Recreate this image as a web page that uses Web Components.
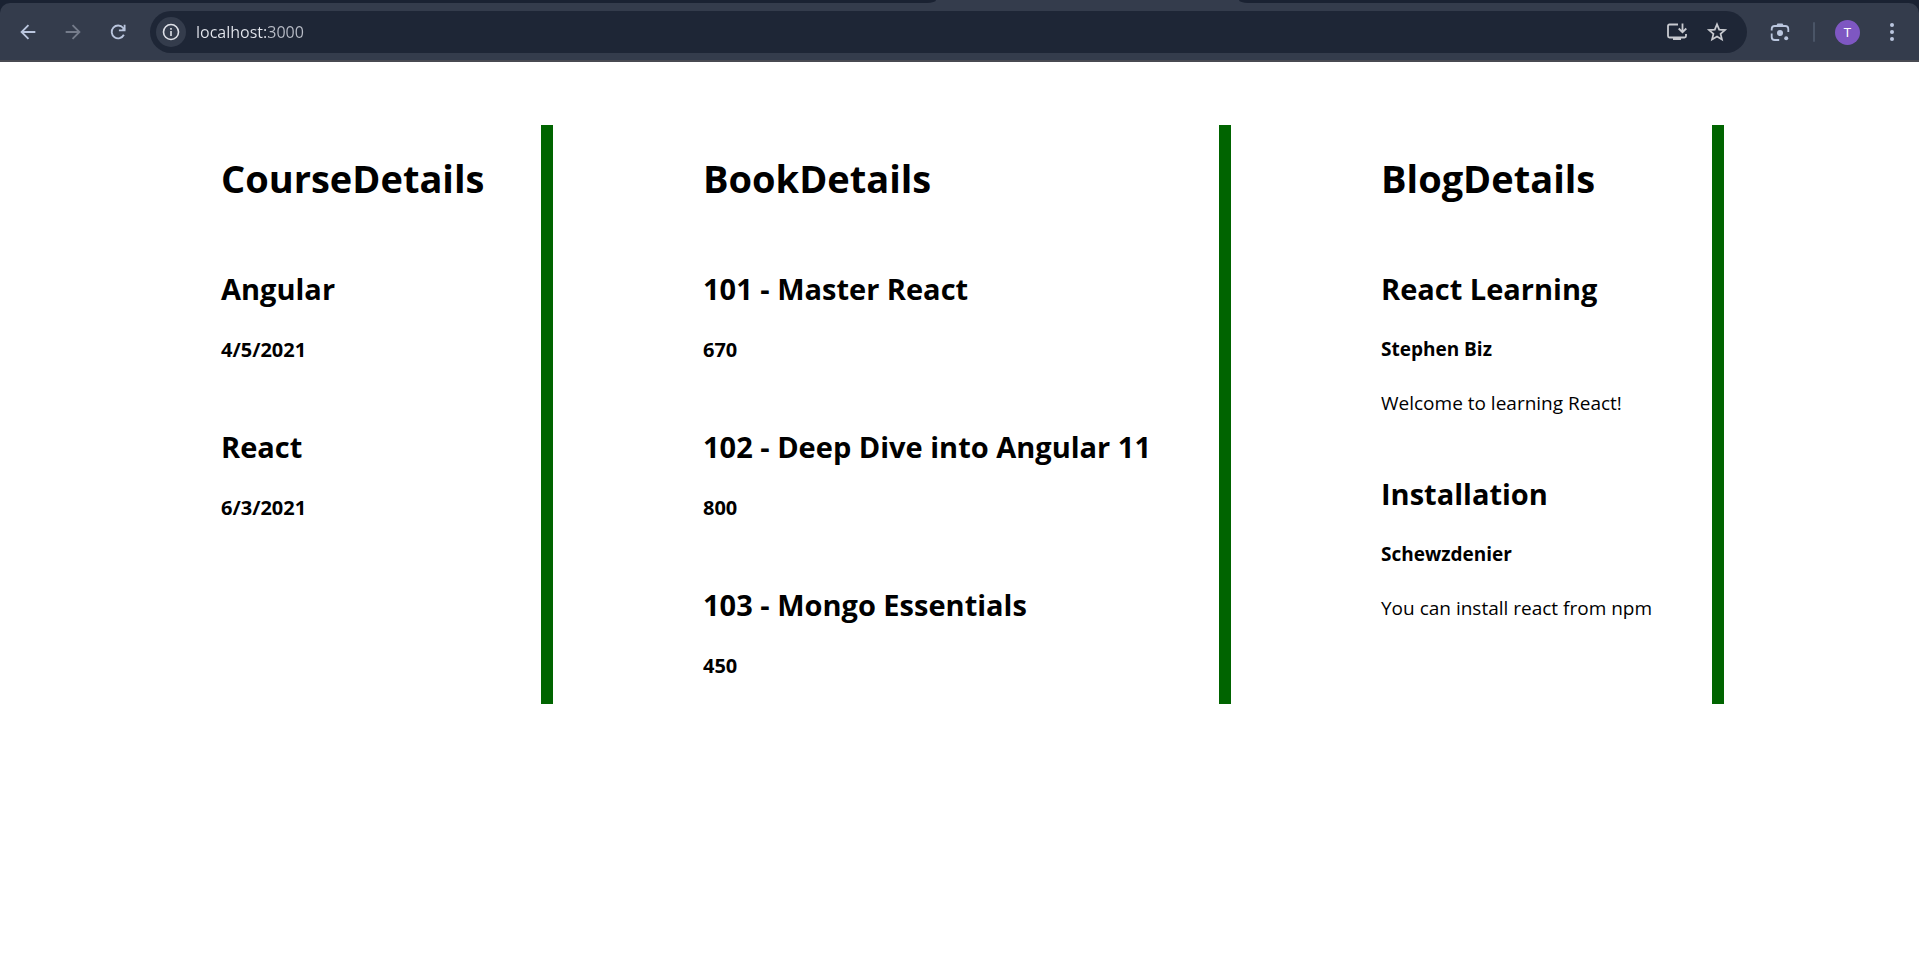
<!DOCTYPE html>
<html lang="en">
<head>
<meta charset="utf-8">
<title>localhost:3000</title>
<style>
  body { margin: 0; background: #fff; color: #000; font-family: "Open Sans", "Noto Sans", sans-serif; }
</style>
</head>
<body>
<browser-bar></browser-bar>
<details-board>
  <details-column heading="CourseDetails">
    <detail-entry heading="Angular" sub="4/5/2021"></detail-entry>
    <detail-entry heading="React" sub="6/3/2021"></detail-entry>
  </details-column>
  <details-column heading="BookDetails">
    <detail-entry heading="101 - Master React" sub="670"></detail-entry>
    <detail-entry heading="102 - Deep Dive into Angular 11" sub="800"></detail-entry>
    <detail-entry heading="103 - Mongo Essentials" sub="450"></detail-entry>
  </details-column>
  <details-column class="posts" heading="BlogDetails">
    <detail-entry class="post" heading="React Learning" sub="Stephen Biz">Welcome to learning React!</detail-entry>
    <detail-entry class="post" heading="Installation" sub="Schewzdenier">You can install react from npm</detail-entry>
  </details-column>
</details-board>

<template id="bar">
  <style>
    :host { display: block; background: #1a2232; }
    .tabs { display: flex; gap: 303px; height: 3px; background: #343c4c; }
    .tabs span { flex: 680; background: #1a2232; border-bottom-left-radius: 9px 3px; }
    .tabs span:first-child { flex: 936; border-radius: 0 0 9px 0 / 0 0 3px 0; }
    .toolbar { display: flex; align-items: center; padding: 8px 7px 7px 5px; background: #343c4c; border-bottom: 2px solid #484a51; border-radius: 10px 10px 0 0; }
    button { display: grid; place-items: center; flex: none; width: 45px; height: 42px; padding: 0; border: 0; background: none; color: #bac6de; font: inherit; }
    button:disabled { color: #757c8b; }
    svg { display: block; fill: none; stroke: currentColor; stroke-width: 2; }
    .address { display: flex; align-items: center; flex: 1; min-width: 0; height: 42px; margin-left: 10px; padding: 0 10px 0 6px; box-sizing: border-box; border-radius: 21px; background: #1e2636; }
    .address button { width: 40px; color: #c8cad0; }
    .address .info { width: 30px; height: 30px; border-radius: 50%; background: #343c4c; color: #dfe1e8; }
    input { flex: 1; min-width: 0; height: 28px; margin-left: 10px; padding: 0; border: 0; outline: 0; font: 16px/28px "Open Sans", "Noto Sans", sans-serif; color: transparent; background: linear-gradient(90deg, #e4e7ee 73px, #b9bdc7 73px); -webkit-background-clip: text; background-clip: text; }
    .lens { width: 44px; margin-left: 11px; }
    .divider { width: 2px; height: 20px; margin-left: 11px; background: #4a5567; border-radius: 1px; }
    .avatar { width: 25px; height: 25px; margin-left: 20px; border-radius: 50%; background: #7e57c2; color: #fff; font: 13px/25px Roboto, sans-serif; }
    .menu { width: 40px; margin-left: 12px; }
  </style>
  <div class="tabs"><span></span><span></span></div>
  <div class="toolbar">
    <button aria-label="Back"><svg width="22" height="22" viewBox="0 0 24 24"><path d="M20 12H5.500M12.500 4.500 5 12l7.500 7.500"/></svg></button>
    <button aria-label="Forward" disabled><svg width="22" height="22" viewBox="0 0 24 24"><path d="M4 12h14.500M11.500 4.500 19 12l-7.500 7.500"/></svg></button>
    <button aria-label="Reload"><svg width="22" height="22" viewBox="0 0 24 24"><path d="M18.400 15A7 7 0 1 1 17.500 7.400L19.500 9.500"/><path d="M19.200 4v6.200H13"/><path d="M16 9.500h3.500V6z" fill="currentColor" stroke="none"/></svg></button>
    <div class="address">
      <button class="info" aria-label="View site information"><svg width="20" height="20" viewBox="0 0 20 20"><circle cx="10" cy="10" r="7.500" stroke-width="1.600"/><path d="M10 9v5M10 6v1.800" stroke-width="1.600"/></svg></button>
      <input type="text" aria-label="Address" value="localhost:3000" spellcheck="false">
      <button aria-label="Install app"><svg width="22" height="20" viewBox="0 0 22 20"><path d="M12 2.500H3.500Q2 2.500 2 4v10q0 1.500 1.500 1.500h15q1.500 0 1.500-1.500v-2" stroke-width="1.800"/><path d="M16.500 1.500v8M12.700 6.500l3.800 3.700 3.800-3.700" stroke-width="1.800"/><path d="M7 15h8v3H7z" fill="currentColor" stroke="none"/></svg></button>
      <button aria-label="Bookmark this tab"><svg width="22" height="22" viewBox="0 0 24 24"><path d="m12 3.500 2.400 5.900 6.300.5-4.800 4.100 1.500 6.200-5.400-3.300-5.400 3.300L8.100 14 3.300 9.900l6.300-.5z" stroke-width="1.900"/></svg></button>
    </div>
    <button class="lens" aria-label="Search with Lens"><svg width="22" height="22" viewBox="0 0 22 22"><path d="M2.700 9.500V8q0-3 3-3h10.600q3 0 3 3v3M2.700 12.500V16q0 3 3 3h4.500" stroke-width="1.800"/><path d="M7 5l1.500-2.500h5L15 5z" fill="currentColor" stroke="none"/><circle cx="11" cy="12" r="3" fill="currentColor" stroke="none"/><circle cx="17.200" cy="17.300" r="2" fill="currentColor" stroke="none"/></svg></button>
    <span class="divider"></span>
    <button class="avatar" aria-label="Profile T">T</button>
    <button class="menu" aria-label="Menu"><svg width="6" height="20" viewBox="0 0 6 20"><g fill="currentColor" stroke="none"><circle cx="3" cy="3" r="2"/><circle cx="3" cy="10" r="2"/><circle cx="3" cy="17" r="2"/></g></svg></button>
  </div>
</template>

<template id="board">
  <style>
    :host { display: grid; grid-template-columns: 332fr 528fr 343fr; gap: 150px; padding: 63px 195px 63px 221px; }
  </style>
  <slot></slot>
</template>

<template id="column">
  <style>
    :host { display: block; padding: 27px 0 25px; border-right: 12px solid #006400; white-space: nowrap; }
    h1 { margin: 0; font-size: 38px; line-height: 53px; font-weight: 700; }
    .entries { display: grid; gap: 64px; margin-top: 64px; }
    :host(.posts) .entries { gap: 57px; }
  </style>
  <h1></h1>
  <div class="entries"><slot></slot></div>
</template>

<template id="entry">
  <style>
    :host { display: block; }
    h2, h3, p { margin: 0; }
    h2 { font-size: 29px; line-height: 40px; font-weight: 700; }
    h3 { margin-top: 27px; font-size: 20px; line-height: 27px; font-weight: 700; }
    p { display: none; margin-top: 27px; font-size: 19px; line-height: 27px; }
    :host(.post) h3 { font-size: 19px; }
    :host(.post) p { display: block; }
  </style>
  <h2></h2>
  <h3></h3>
  <p><slot></slot></p>
</template>

<script>
  class TemplateElement extends HTMLElement {
    constructor() {
      super();
      this.attachShadow({ mode: "open" })
        .append(document.getElementById(this.constructor.template).content.cloneNode(true));
    }
    fill(selector, attribute) {
      this.shadowRoot.querySelector(selector).textContent = this.getAttribute(attribute);
    }
  }
  class BrowserBar extends TemplateElement { static template = "bar"; }
  class DetailsBoard extends TemplateElement { static template = "board"; }
  class DetailsColumn extends TemplateElement {
    static template = "column";
    connectedCallback() { this.fill("h1", "heading"); }
  }
  class DetailEntry extends TemplateElement {
    static template = "entry";
    connectedCallback() { this.fill("h2", "heading"); this.fill("h3", "sub"); }
  }
  customElements.define("browser-bar", BrowserBar);
  customElements.define("details-board", DetailsBoard);
  customElements.define("details-column", DetailsColumn);
  customElements.define("detail-entry", DetailEntry);
</script>
</body>
</html>
